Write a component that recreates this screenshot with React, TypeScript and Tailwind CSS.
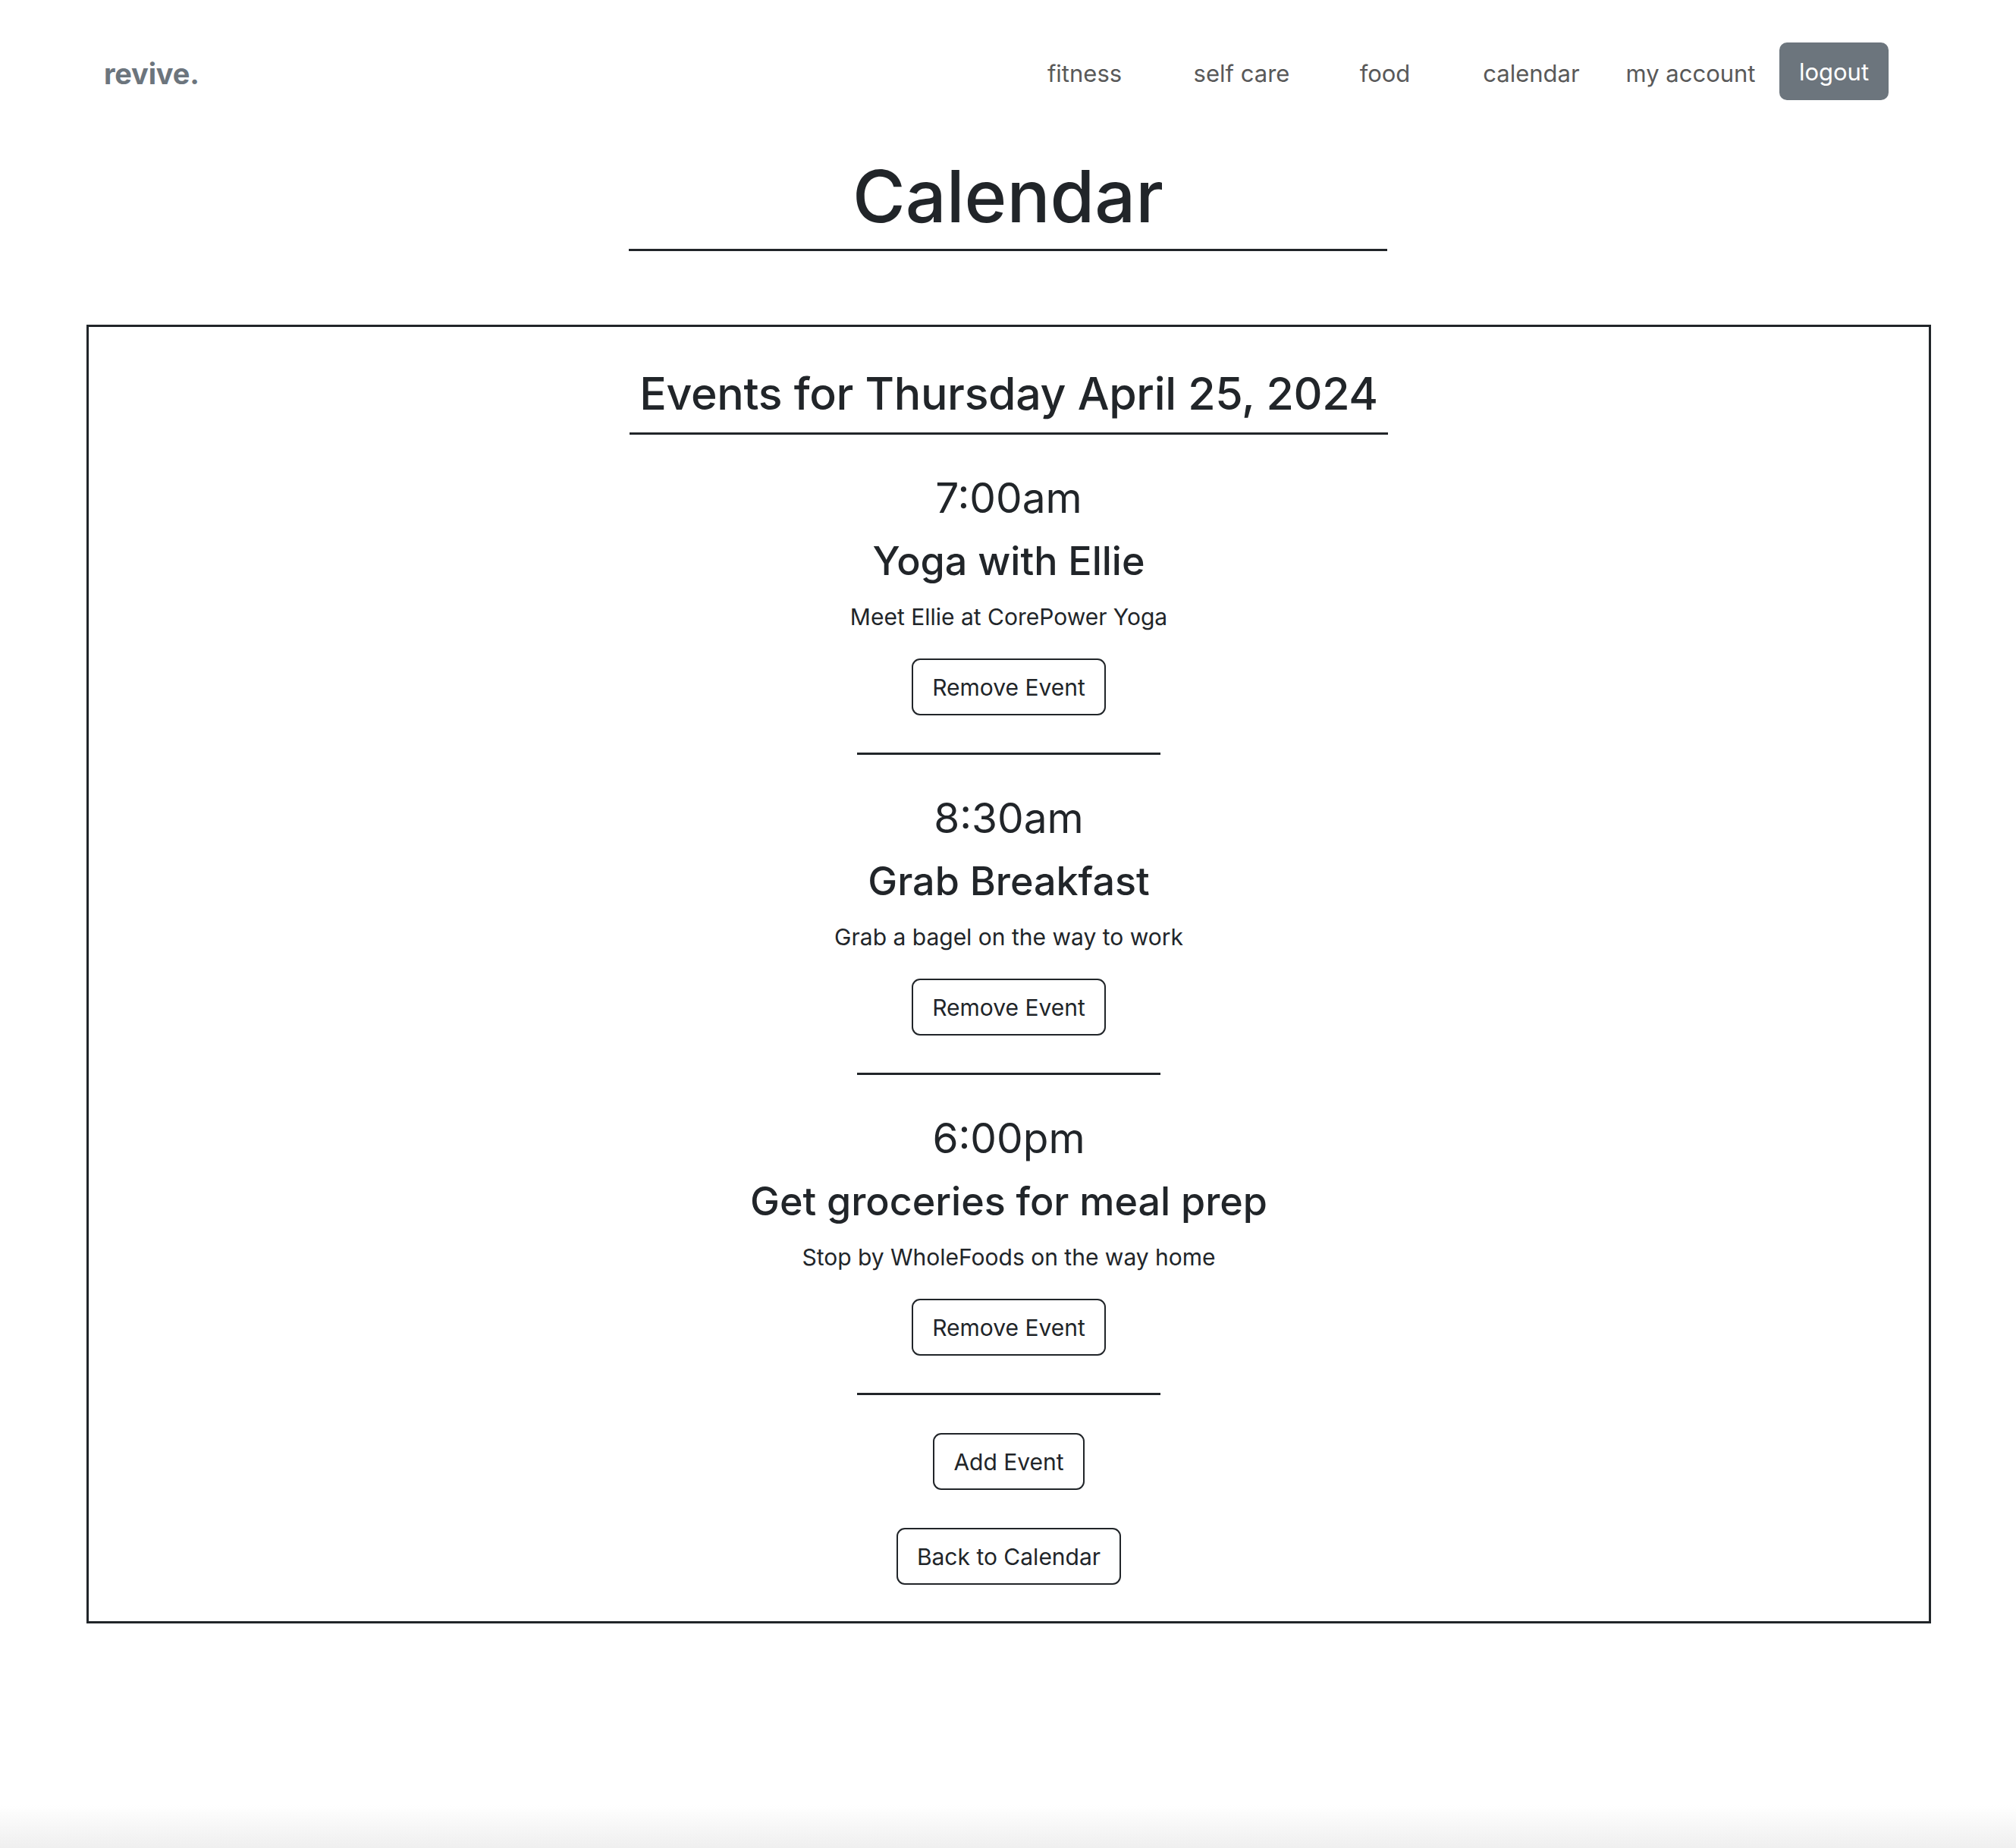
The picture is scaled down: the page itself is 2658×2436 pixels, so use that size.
import { JSX } from 'react'

type CalEvent = {
  time: string
  title: string
  description: string
}

const events: CalEvent[] = [
  { time: '7:00am', title: 'Yoga with Ellie', description: 'Meet Ellie at CorePower Yoga' },
  { time: '8:30am', title: 'Grab Breakfast', description: 'Grab a bagel on the way to work' },
  { time: '6:00pm', title: 'Get groceries for meal prep', description: 'Stop by WholeFoods on the way home' },
]

function OutlineButton({ children }: { children: string }): JSX.Element {
  return (
    <button
      type="button"
      className="h-[75px] px-[25px] rounded-[11px] border-2 border-[#212529] bg-white text-[30px] leading-none text-[#212529]"
    >
      {children}
    </button>
  )
}

function NavBar(): JSX.Element {
  return (
    <nav className="mt-[56px] h-[76px] flex items-center pl-[137px] pr-[168px]">
      <a className="pt-[6px] text-[38px] font-bold text-[#6c757d] tracking-[-0.005em]">revive.</a>
      <div className="ml-auto flex items-center text-[31px] text-[#595959]">
        <a className="w-[206px] pt-[6px] text-center">fitness</a>
        <a className="w-[208px] pt-[6px] text-center">self care</a>
        <a className="w-[170px] pt-[6px] text-center">food</a>
        <a className="w-[216px] pt-[6px] text-center">calendar</a>
        <a className="w-[204px] pt-[6px] text-center">my account</a>
        <button
          type="button"
          className="ml-[15px] w-[144px] h-[76px] pt-[2px] rounded-[10px] bg-[#6c757d] text-white text-[31px]"
        >
          logout
        </button>
      </div>
    </nav>
  )
}

export default function App(): JSX.Element {
  return (
    <div className="min-h-screen flex flex-col bg-white text-[#212529] font-['Inter','Noto_Sans',sans-serif]">
      <NavBar />

      <div className="mt-[67px] w-[1000px] mx-auto border-b-[3px] border-[#212529] pb-[9px]">
        <h1 className="text-center text-[95px] leading-[120px] font-medium">Calendar</h1>
      </div>

      <section className="mt-[97px] ml-[114px] mr-[112px] border-[3px] border-[#212529] pt-[52px] pb-[48px] flex flex-col items-center">
        <div className="w-[1000px] border-b-[3px] border-[#212529] pb-[15px]">
          <h2 className="text-center whitespace-nowrap text-[59px] leading-[72px] font-medium tracking-[-0.005em]">
            Events for Thursday April 25, 2024
          </h2>
        </div>

        <div className="mt-[50px] flex flex-col items-center">
          {events.map((ev) => (
            <div key={ev.time} className="flex flex-col items-center">
              <h3 className="text-[55px] leading-[66px]">{ev.time}</h3>
              <h3 className="mt-[20px] text-[52px] leading-[62px] font-medium">{ev.title}</h3>
              <p className="mt-[20px] text-[30px] leading-[45px]">{ev.description}</p>
              <div className="mt-[32px]">
                <OutlineButton>Remove Event</OutlineButton>
              </div>
              <div className="mt-[49px] mb-[50px] w-[400px] h-[3px] bg-[#212529]" />
            </div>
          ))}
        </div>

        <div className="flex flex-col items-center gap-[50px]">
          <OutlineButton>Add Event</OutlineButton>
          <OutlineButton>Back to Calendar</OutlineButton>
        </div>
      </section>

      <div className="flex-1" />
      <div className="h-[56px] bg-linear-to-b from-white to-[#efefef]" />
    </div>
  )
}
